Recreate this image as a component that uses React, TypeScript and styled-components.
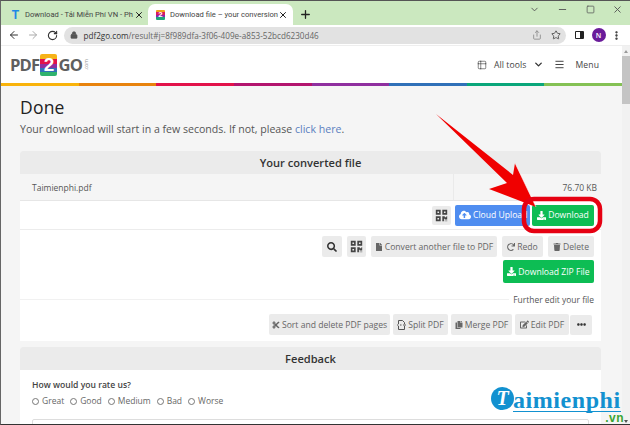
import React from "react";
import styled, { createGlobalStyle } from "styled-components";
import { ArrowLeft, ArrowRight, RotateCw, Lock, Share, Star, ChevronDown, Minus, Square, X, Plus, EllipsisVertical, Table2, Menu as MenuIcon } from "lucide-react";
import { FaCloudUploadAlt, FaDownload, FaSearch, FaQrcode, FaFile, FaRedo, FaTrash, FaCut, FaEllipsisH, FaEdit, FaCopy } from "react-icons/fa";

const Global = createGlobalStyle`
  html, body { margin: 0; padding: 0; background: #fff; }
  * { box-sizing: border-box; }
  body { font-family: "Open Sans", "Liberation Sans", sans-serif; }
`;

const Frame = styled.div`
  position: relative; width: 630px; height: 425px; overflow: hidden;
  border-top: 1px solid #555; border-bottom: 1px solid #333; border-left: 1px solid #666;
  display: flex; flex-direction: column; background: #fff;
`;
const TabStrip = styled.div`
  height: 24px; flex: none; background: #cbe8bf; display: flex; align-items: flex-end; padding-left: 4px; color: #444;
`;
const Tab = styled.div<{ $active?: boolean }>`
  width: ${p => (p.$active ? 145 : 143)}px; height: 21px; flex: none; display: flex; align-items: center; gap: 5px;
  padding: 0 ${p => (p.$active ? 5 : 4)}px 0 ${p => (p.$active ? 8 : 6)}px;
  border-radius: 7px 7px 0 0; background: ${p => (p.$active ? "#fff" : "transparent")};
  font: 7.6px Roboto, "Open Sans", sans-serif; white-space: nowrap; color: #444;
`;
const TabLabel = styled.span`flex: 1; min-width: 0;`;
const TabT = styled.span`width: 9px; color: #1e88e5; font: 900 12px "Liberation Sans", sans-serif; text-align: center;`;
const Fav = styled.span`
  width: 9px; height: 10px; border-radius: 1px; color: #fff; font: 700 8px/10px "Liberation Sans", sans-serif; text-align: center;
  background: linear-gradient(#f0a018 0 25%, #d81b60 25% 50%, #8e24aa 50% 75%, #1fa37a 75%);
`;
const NewTab = styled.span`display: flex; margin: 0 0 4px 6px; color: #222;`;
const WinControls = styled.div`margin-left: auto; display: flex; align-items: center; height: 100%; color: #555; padding-bottom: 8px;`;
const WinBtn = styled.span<{ $w: number }>`width: ${p => p.$w}px; display: flex; justify-content: center;`;

const Toolbar = styled.div`
  height: 21px; flex: none; display: flex; align-items: center; padding-left: 3px; background: #fff; border-bottom: 1px solid #eee; color: #444;
`;
const NavBtn = styled.span<{ $dim?: boolean }>`width: 19.5px; display: flex; justify-content: center; color: ${p => (p.$dim ? "#aaa" : "#333")};`;
const UrlPill = styled.div`
  width: 502px; height: 17px; margin-left: 1px; border-radius: 9px; background: #e2e2e2; display: flex; align-items: center; padding: 0 4px 0 6px; gap: 6px; font-size: 8.15px; color: #666; white-space: nowrap;
`;
const Host = styled.span`color: #333;`;
const UrlRest = styled.span`flex: 1;`;
const StarIcon = styled(Star)`margin: 0 1px 0 3px;`;
const Side = styled.span`width: 9px; height: 8px; border: 1.5px solid #222; border-right-width: 4.5px; margin-left: 9px; border-radius: 1px;`;
const Avatar = styled.span`
  width: 14px; height: 14px; border-radius: 50%; background: #6a1b9a; color: #fff; font-size: 7px; font-weight: 600; display: flex; align-items: center; justify-content: center; margin-left: 8px;
`;
const Dots = styled.span`display: flex; margin-left: 5px; color: #222;`;

const Viewport = styled.div`flex: 1; min-height: 0; display: flex;`;
const Content = styled.div`flex: 1; min-width: 0; background: #f5f5f5; display: flex; flex-direction: column;`;
const Scrollbar = styled.div`width: 8px; flex: none; background: #f1f1f1; display: flex; flex-direction: column; align-items: center;`;
const ScrollUp = styled.span`margin: 4px 0 3px; border: 2px solid transparent; border-top: 0; border-bottom: 3px solid #999;`;
const ScrollDown = styled.span`margin-top: auto; margin-bottom: 1px; border: 2px solid transparent; border-bottom: 0; border-top: 3px solid #555;`;
const Thumb = styled.div`width: 100%; height: 48px; background: #c4c4c4;`;

const Header = styled.header`
  height: 37px; flex: none; background: #fff; display: flex; align-items: center; padding: 0 23px 0 9px;
`;
const Logo = styled.div`display: flex; align-items: center; font: 700 16.6px "Open Sans", sans-serif; color: #5f5f5f; letter-spacing: -.8px;`;
const Logo2 = styled.span`
  width: 17px; height: 22px; border-radius: 2px; margin: 0 1px; color: #fff; font: 900 19px/22px "Liberation Sans", sans-serif; text-align: center; letter-spacing: 0;
  background: linear-gradient(#f6b318 0 25%, #e2124a 25% 45%, #8f2f9f 45% 65%, #3070b8 65% 82%, #2fb36d 82%);
`;
const LogoCom = styled.span`font-size: 5px; font-weight: 400; writing-mode: vertical-rl; transform: rotate(180deg); letter-spacing: 0; margin-left: 1px; color: #999;`;
const Nav = styled.nav`margin-left: auto; display: flex; align-items: center; font-size: 8.6px; color: #444; letter-spacing: .1px;`;
const NavIcon = styled.span<{ $ml: number }>`display: flex; margin-left: ${p => p.$ml}px; color: #333;`;
const NavText = styled.span<{ $ml: number }>`margin-left: ${p => p.$ml}px;`;

const Rainbow = styled.div`height: 3px; flex: none; display: flex;`;
const Stripe = styled.span<{ $c: string }>`flex: 1; background: ${p => p.$c};`;

const Main = styled.main`padding: 9px 21px 0 19px; flex: 1; min-height: 0;`;
const H1 = styled.h1`margin: 0; font-size: 17.5px; font-weight: 400; line-height: 24px; color: #222; letter-spacing: .2px;`;
const Lead = styled.p`margin: 2px 0 0; font-size: 10.58px; line-height: 16px; color: #555;`;
const A = styled.a`color: #5b7fc0;`;

const Card = styled.section<{ $mt: number }>`margin-top: ${p => p.$mt}px; background: #fff; border-radius: 3px 3px 0 0;`;
const CardHead = styled.div`height: 23px; background: #ebebeb; border-radius: 3px 3px 0 0; display: flex; align-items: center; justify-content: center; font-size: 11.1px; font-weight: 600; color: #333;`;
const FileRow = styled.div`height: 27px; background: #f5f5f5; border-bottom: 1px solid #e6e6e6; display: grid; grid-template-columns: 434px 1fr; align-items: stretch; font-size: 8.5px; color: #555;`;
const FileName = styled.div`display: flex; align-items: center; padding-left: 12px; border-right: 1px solid #eaeaea;`;
const FileSize = styled.div`display: flex; align-items: center; justify-content: flex-end; padding-right: 4px;`;
const ActionRow = styled.div<{ $h: number; $gap?: number; $pt?: number }>`
  height: ${p => p.$h}px; display: flex; align-items: center; justify-content: flex-end; gap: ${p => p.$gap ?? 5}px; padding: ${p => p.$pt ?? 0}px 7px 0 0;
`;
const Btn = styled.span<{ $w?: number; $h?: number; $kind?: "green" | "blue" }>`
  display: inline-flex; align-items: center; justify-content: center; gap: 2px; flex: none;
  width: ${p => (p.$w ? `${p.$w}px` : "auto")}; height: ${p => p.$h ?? 21}px; border-radius: 2px; font-size: 8.6px; white-space: nowrap; overflow: hidden;
  background: ${p => (p.$kind === "green" ? "#0dbd54" : p.$kind === "blue" ? "#4f8df0" : "#ebebeb")};
  color: ${p => (p.$kind ? "#fff" : "#666")};
`;
const QrBtn = styled(Btn)`margin-right: 2px;`;
const MoreBtn = styled(Btn)`margin-left: -2px;`;
const Clip = styled.span`display: inline-flex; align-items: center; gap: 2px; justify-content: flex-start; width: 100%; padding-left: 4px;`;
const Divider = styled.div`border-top: 1px solid #ececec;`;
const Further = styled.div`display: flex; align-items: center; height: 18px; margin-top: 7px; padding-right: 7px; font-size: 8.45px; color: #555; gap: 4px;`;
const Rule = styled.span`flex: 1; border-top: 1px solid #f1f1f1;`;
const EditRow = styled(ActionRow)`padding: 0 9px 0 0;`;

const FeedBody = styled.div`padding: 7px 12px 0; height: 60px;`;
const Question = styled.div`font-size: 8.6px; font-weight: 600; color: #444; line-height: 16px;`;
const Radios = styled.div`display: flex; gap: 6px; font-size: 8.5px; color: #666; line-height: 16px;`;
const RadioItem = styled.label`display: inline-flex; align-items: center; gap: 3px;`;
const RadioDot = styled.span`width: 7px; height: 7px; border: 1px solid #777; border-radius: 50%; background: #fff;`;
const Textarea = styled.div`height: 20px; margin-top: 10px; border: 1px solid #ddd; border-radius: 2px;`;

const Arrow = styled.svg`position: absolute; left: 0; top: 0; pointer-events: none;`;
const Watermark = styled.div`position: absolute; left: 490px; top: 386px; width: 136px; height: 37px;`;
const Badge = styled.span`
  position: absolute; left: 0; top: 0; width: 23px; height: 23px; border-radius: 50%; background: #1291d0; color: #fff;
  font: italic 700 20px/23px "Liberation Serif", serif; text-align: center;
`;
const Brand = styled.span`
  position: absolute; left: 22px; top: 2px; font: 700 24px/22px "Liberation Serif", serif; color: #1291d0; letter-spacing: .55px; border-bottom: 1px solid #1291d0;
`;
const BrandVn = styled.span`position: absolute; right: 3px; top: 25.5px; font: 700 12px/10px "Liberation Sans", sans-serif; color: #3aa535; letter-spacing: .5px;`;

const stripes = ["#f9b30b", "#e8830d", "#e2124a", "#b3146e", "#8f2f9f", "#3070b8", "#0aa67a", "#84c154"];

const SplitIcon = () => (
  <svg width="9" height="10" viewBox="0 0 9 10" fill="none" stroke="#555" strokeWidth="1">
    <path d="M1.5 4V.5h4l2 2V4M1.5 6v3.5h6V6M0 5h1.5M3 5h1.5M6 5h3" />
  </svg>
);

export default function App() {
  return (
    <Frame>
      <Global />
      <TabStrip>
        <Tab><TabT>T</TabT><TabLabel>Download - Tải Miễn Phí VN - Ph</TabLabel><X size={10} strokeWidth={2.4} color="#222" /></Tab>
        <Tab $active><Fav>2</Fav><TabLabel>Download file – your conversion</TabLabel><X size={10} strokeWidth={2.4} color="#222" /></Tab>
        <NewTab><Plus size={13} strokeWidth={2.4} /></NewTab>
        <WinControls>
          <WinBtn $w={27}><ChevronDown size={11} /></WinBtn>
          <WinBtn $w={28}><Minus size={11} /></WinBtn>
          <WinBtn $w={28}><Square size={9} /></WinBtn>
          <WinBtn $w={26}><X size={11} /></WinBtn>
        </WinControls>
      </TabStrip>
      <Toolbar>
        <NavBtn><ArrowLeft size={12} /></NavBtn>
        <NavBtn $dim><ArrowRight size={12} /></NavBtn>
        <NavBtn><RotateCw size={11} strokeWidth={2.4} /></NavBtn>
        <UrlPill>
          <Lock size={8} fill="#555" color="#555" />
          <UrlRest><Host>pdf2go.com</Host>/result#j=8f989dfa-3f06-409e-a853-52bcd6230d46</UrlRest>
          <Share size={10} color="#888" />
          <StarIcon size={10} color="#444" />
        </UrlPill>
        <Side />
        <Avatar>N</Avatar>
        <Dots><EllipsisVertical size={11} strokeWidth={3} /></Dots>
      </Toolbar>
      <Viewport>
        <Content>
          <Header>
            <Logo>PDF<Logo2>2</Logo2>GO<LogoCom>.com</LogoCom></Logo>
            <Nav>
              <NavIcon $ml={0}><Table2 size={10} strokeWidth={1.4} /></NavIcon>
              <NavText $ml={7}>All tools</NavText>
              <NavIcon $ml={6}><ChevronDown size={11} strokeWidth={3} /></NavIcon>
              <NavIcon $ml={10}><MenuIcon size={11} strokeWidth={2} /></NavIcon>
              <NavText $ml={11}>Menu</NavText>
            </Nav>
          </Header>
          <Rainbow>{stripes.map(c => <Stripe key={c} $c={c} />)}</Rainbow>
          <Main>
            <H1>Done</H1>
            <Lead>Your download will start in a few seconds. If not, please <A>click here</A>.</Lead>
            <Card $mt={14}>
              <CardHead>Your converted file</CardHead>
              <FileRow>
                <FileName>Taimienphi.pdf</FileName>
                <FileSize>76.70 KB</FileSize>
              </FileRow>
              <ActionRow $h={28} $gap={2}>
                <QrBtn $w={19} $h={19}><FaQrcode size={13} color="#444" /></QrBtn>
                <Btn $w={75} $kind="blue"><Clip><FaCloudUploadAlt size={12} />Cloud Upload</Clip></Btn>
                <Btn $w={62} $kind="green"><FaDownload size={9} />Download</Btn>
              </ActionRow>
              <Divider />
              <ActionRow $h={30} $pt={3}>
                <Btn $w={20}><FaSearch size={10} color="#333" /></Btn>
                <Btn $w={19}><FaQrcode size={13} color="#444" /></Btn>
                <Btn $w={126}><FaFile size={8} />Convert another file to PDF</Btn>
                <Btn $w={41}><FaRedo size={8} />Redo</Btn>
                <Btn $w={46}><FaTrash size={8} />Delete</Btn>
              </ActionRow>
              <ActionRow $h={23}>
                <Btn $w={91} $h={23} $kind="green"><FaDownload size={9} />Download ZIP File</Btn>
              </ActionRow>
              <Further><Rule />Further edit your file</Further>
              <EditRow $h={33} $gap={3}>
                <Btn $w={121}><FaCut size={8} />Sort and delete PDF pages</Btn>
                <Btn $w={55}><SplitIcon />Split PDF</Btn>
                <Btn $w={61}><FaCopy size={8} />Merge PDF</Btn>
                <Btn $w={54}><FaEdit size={9} />Edit PDF</Btn>
                <MoreBtn $w={22} $h={20}><FaEllipsisH size={9} color="#333" /></MoreBtn>
              </EditRow>
            </Card>
            <Card $mt={6}>
              <CardHead>Feedback</CardHead>
              <FeedBody>
                <Question>How would you rate us?</Question>
                <Radios>
                  {["Great", "Good", "Medium", "Bad", "Worse"].map(t => (
                    <RadioItem key={t}><RadioDot />{t}</RadioItem>
                  ))}
                </Radios>
                <Textarea />
              </FeedBody>
            </Card>
          </Main>
        </Content>
        <Scrollbar><ScrollUp /><Thumb /><ScrollDown /></Scrollbar>
      </Viewport>
      <Arrow width="630" height="425" viewBox="1 1 630 425">
        <polygon points="436,114 513,175 515,163 536,207 489,189 507,183" fill="#f00000" />
        <path d="M515,163 L536,207" stroke="#fff" strokeWidth="0.6" fill="none" />
        <rect x="524" y="199" width="76" height="32" rx="10" fill="none" stroke="#e60012" strokeWidth="4.5" />
      </Arrow>
      <Watermark>
        <Badge>T</Badge>
        <Brand>aimienphi</Brand>
        <BrandVn>.vn</BrandVn>
      </Watermark>
    </Frame>
  );
}
